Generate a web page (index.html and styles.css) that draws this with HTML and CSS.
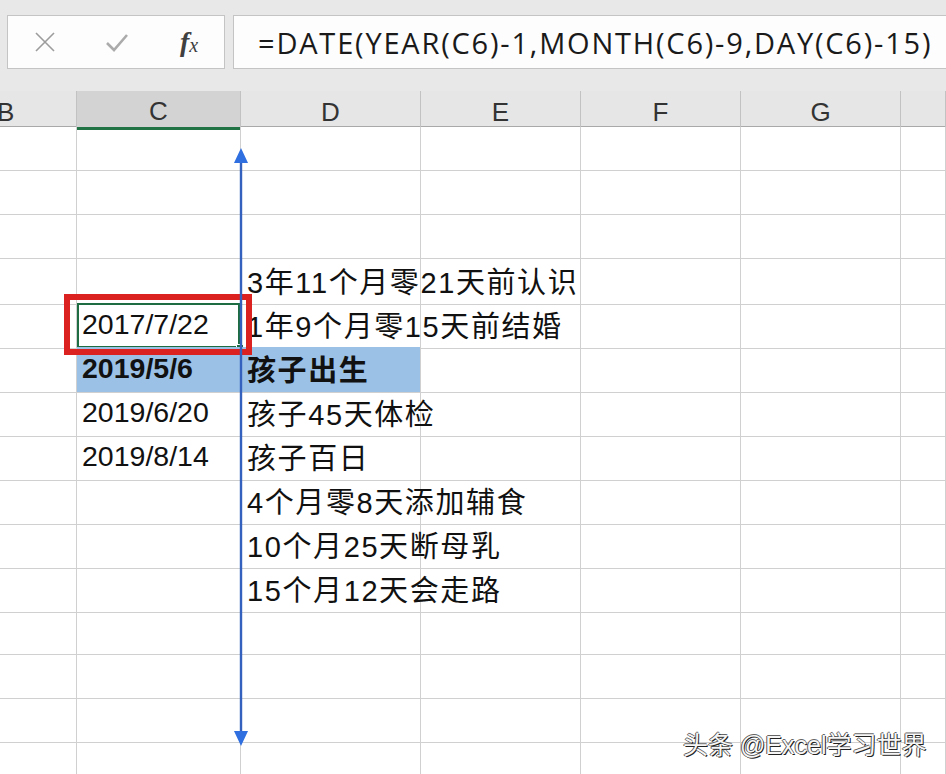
FILE: index.html
```html
<!DOCTYPE html>
<html lang="zh-CN">
<head>
    <meta charset="UTF-8">
    <title>Excel DATE</title>
    <link rel="stylesheet" href="styles.css">
</head>
<body>
    <div class="formula-bar">
        <div class="fx-buttons">
            <span class="btn-icon">
                <svg width="24" height="24" viewBox="0 0 24 24"><path d="M3 3 L21 21 M21 3 L3 21" stroke="#9c9c9c" stroke-width="1.6" fill="none"/></svg>
            </span>
            <span class="btn-icon">
                <svg width="24" height="24" viewBox="0 0 24 24"><path d="M2 13 L9 20 L22 5" stroke="#ababab" stroke-width="2.6" fill="none"/></svg>
            </span>
            <span class="btn-icon fx">f<span class="fx-x">x</span></span>
        </div>
        <div class="formula-input">=DATE(YEAR(C6)-1,MONTH(C6)-9,DAY(C6)-15)</div>
    </div>

    <div class="sheet">
        <div class="row head">
            <div class="hcell first"><span class="b-letter">B</span></div>
            <div class="hcell selected">C</div>
            <div class="hcell">D</div>
            <div class="hcell">E</div>
            <div class="hcell">F</div>
            <div class="hcell">G</div>
            <div class="hcell"></div>
        </div>
        <div class="row"><div class="cell"></div><div class="cell"></div><div class="cell"></div><div class="cell"></div><div class="cell"></div><div class="cell"></div><div class="cell"></div></div>
        <div class="row"><div class="cell"></div><div class="cell"></div><div class="cell"></div><div class="cell"></div><div class="cell"></div><div class="cell"></div><div class="cell"></div></div>
        <div class="row"><div class="cell"></div><div class="cell"></div><div class="cell"></div><div class="cell"></div><div class="cell"></div><div class="cell"></div><div class="cell"></div></div>
        <div class="row"><div class="cell"></div><div class="cell"></div><div class="cell text">3年11个月零21天前认识</div><div class="cell"></div><div class="cell"></div><div class="cell"></div><div class="cell"></div></div>
        <div class="row"><div class="cell"></div><div class="cell date active">2017/7/22<span class="fill-handle"></span></div><div class="cell text">1年9个月零15天前结婚</div><div class="cell"></div><div class="cell"></div><div class="cell"></div><div class="cell"></div></div>
        <div class="row"><div class="cell"></div><div class="cell date hl bold">2019/5/6</div><div class="cell text hl bold">孩子出生</div><div class="cell"></div><div class="cell"></div><div class="cell"></div><div class="cell"></div></div>
        <div class="row"><div class="cell"></div><div class="cell date">2019/6/20</div><div class="cell text">孩子45天体检</div><div class="cell"></div><div class="cell"></div><div class="cell"></div><div class="cell"></div></div>
        <div class="row"><div class="cell"></div><div class="cell date">2019/8/14</div><div class="cell text">孩子百日</div><div class="cell"></div><div class="cell"></div><div class="cell"></div><div class="cell"></div></div>
        <div class="row"><div class="cell"></div><div class="cell"></div><div class="cell text">4个月零8天添加辅食</div><div class="cell"></div><div class="cell"></div><div class="cell"></div><div class="cell"></div></div>
        <div class="row"><div class="cell"></div><div class="cell"></div><div class="cell text">10个月25天断母乳</div><div class="cell"></div><div class="cell"></div><div class="cell"></div><div class="cell"></div></div>
        <div class="row"><div class="cell"></div><div class="cell"></div><div class="cell text">15个月12天会走路</div><div class="cell"></div><div class="cell"></div><div class="cell"></div><div class="cell"></div></div>
        <div class="row"><div class="cell"></div><div class="cell"></div><div class="cell"></div><div class="cell"></div><div class="cell"></div><div class="cell"></div><div class="cell"></div></div>
        <div class="row"><div class="cell"></div><div class="cell"></div><div class="cell"></div><div class="cell"></div><div class="cell"></div><div class="cell"></div><div class="cell"></div></div>
        <div class="row"><div class="cell"></div><div class="cell"></div><div class="cell"></div><div class="cell"></div><div class="cell"></div><div class="cell"></div><div class="cell"></div></div>
        <div class="row"><div class="cell"></div><div class="cell"></div><div class="cell"></div><div class="cell"></div><div class="cell"></div><div class="cell"></div><div class="cell"></div></div>

        <!-- Markierungen über dem Blatt -->
        <div class="red-box"></div>
        <svg class="timeline-arrow" width="16" height="600" viewBox="0 0 16 600">
            <line x1="8" y1="14" x2="8" y2="584" stroke="#3461bd" stroke-width="2.4"/>
            <polygon points="8,0 1,15 15,15" fill="#2f6fe0"/>
            <polygon points="8,598 1,583 15,583" fill="#2f6fe0"/>
        </svg>
        <div class="watermark">头条 @Excel学习世界</div>
    </div>
</body>
</html>
```

FILE: styles.css
```css
/* Excel-Ansicht */
body {
    margin: 0;
    width: 946px;
    height: 774px;
    overflow: hidden;
    background-color: #fff;
    font-family: "Liberation Sans", "Noto Sans CJK SC", sans-serif;
    color: #111;
}

.formula-bar {
    height: 91px;
    background-color: #e8e8e8;
    display: flex;
    align-items: flex-start;
    padding-top: 15px;
    box-sizing: border-box;
}

.fx-buttons {
    margin-left: 7px;
    width: 218px;
    height: 54px;
    box-sizing: border-box;
    background-color: #fdfdfd;
    border: 1px solid #c4c4c4;
    display: flex;
    align-items: center;
    padding-left: 25px;
    gap: 48px;
}

.btn-icon {
    width: 24px;
    height: 24px;
    display: flex;
    align-items: center;
    justify-content: center;
}

.fx {
    font-family: "Liberation Serif", serif;
    font-style: italic;
    font-weight: bold;
    font-size: 28px;
    color: #404040;
}

.fx-x {
    font-size: 20px;
    font-weight: normal;
    margin-top: 7px;
}

.formula-input {
    margin-left: 8px;
    flex: 1;
    height: 54px;
    box-sizing: border-box;
    background-color: #fdfdfd;
    border: 1px solid #c4c4c4;
    border-right: none;
    padding-left: 24px;
    display: flex;
    align-items: center;
    font-family: "Open Sans", sans-serif;
    font-size: 29px;
    letter-spacing: 1.8px;
    color: #1a1a1a;
    white-space: nowrap;
}

.sheet {
    position: relative;
}

.row {
    display: grid;
    grid-template-columns: 77px 164px 180px 160px 160px 160px 45px;
    height: 44px;
}

.row.head {
    height: 36px;
    box-sizing: border-box;
    background-color: #e6e6e6;
    border-bottom: 1px solid #a9a9a9;
}

.hcell {
    border-right: 1px solid #c2c2c2;
    display: flex;
    align-items: center;
    justify-content: center;
    padding-top: 5px;
    font-size: 26px;
    color: #333;
}

.hcell.first {
    justify-content: flex-start;
    border-right: none;
}

.b-letter {
    margin-left: -3px;
}

.hcell.selected {
    background-color: #d3d3d3;
    border-bottom: 3px solid #217346;
    border-left: 1px solid #c2c2c2;
    margin-left: -1px;
    margin-bottom: -1px;
}

.cell {
    border-right: 1px solid #d0d0d0;
    border-bottom: 1px solid #d0d0d0;
    display: flex;
    align-items: center;
    white-space: nowrap;
    overflow: visible;
    position: relative;
    padding-bottom: 3px;
}

.date {
    font-size: 28.5px;
    padding-left: 5px;
}

.text {
    font-size: 29px;
    letter-spacing: 1.6px;
    padding-left: 6px;
}

.bold {
    font-weight: bold;
}

.hl {
    background-color: #9bc2e6;
}

.active {
    box-shadow: inset 0 0 0 2px #1e6c42;
}

.fill-handle {
    position: absolute;
    right: -4px;
    bottom: -4px;
    width: 6px;
    height: 6px;
    background-color: #1e6c42;
    border: 1px solid #fff;
}

.red-box {
    position: absolute;
    left: 64px;
    top: 203px;
    width: 188px;
    height: 61px;
    box-sizing: border-box;
    border: 6px solid #dc2121;
}

.timeline-arrow {
    position: absolute;
    left: 233px;
    top: 57px;
}

.watermark {
    position: absolute;
    left: 683px;
    top: 634px;
    font-size: 25px;
    color: #f6f6f6;
    text-shadow: 1px 1px 0 #222, -1px 0 0 #555, 0 -1px 0 #666;
    white-space: nowrap;
}
```
